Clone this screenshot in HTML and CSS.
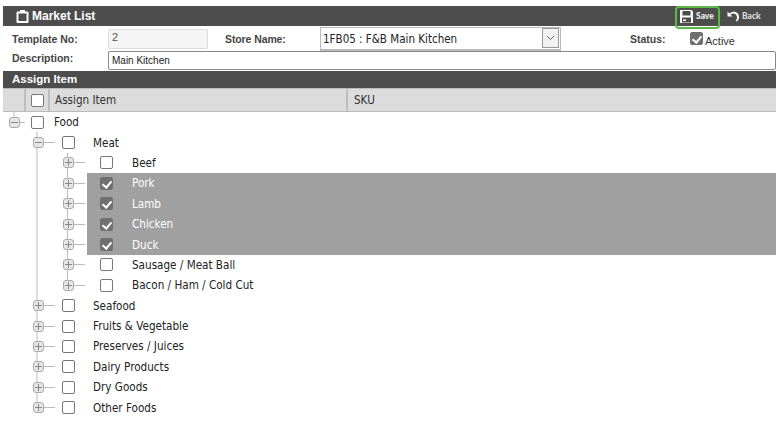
FILE: index.html
```html
<!doctype html>
<html lang="en">

<head>
	<meta charset="UTF-8">
	<title>Market List</title>
	<link rel="stylesheet" href="styles.css">
</head>

<body>
	<div class="page">
		<div class="title-bar">
			<svg class="title-icon" width="13" height="13" viewBox="0 0 13 13">
				<path d="M1.500 1.500h10a1 1 0 0 1 1 1v9.500a1 1 0 0 1-1 1h-10a1 1 0 0 1-1-1V2.500a1 1 0 0 1 1-1z" fill="#fff" />
				<rect x="2.500" y="3.500" width="8" height="7.500" fill="#4d4d4d" />
				<rect x="4" y="0" width="5" height="3" fill="#fff" />
			</svg>
			<span class="title-text">Market List</span>
			<div class="actions">
				<a class="action action-save" href="#">
					<svg width="13" height="13" viewBox="0 0 13 13">
						<path d="M0 0h11.500L13 1.500V13H0z" fill="#fff" />
						<rect x="2.500" y="1" width="8" height="4.500" fill="#4d4d4d" />
						<rect x="2" y="7.500" width="9" height="5" fill="#4d4d4d" />
						<rect x="3" y="9.500" width="3" height="1.500" fill="#fff" />
					</svg>
					Save
				</a>
				<a class="action action-back" href="#">
					<svg width="13" height="11" viewBox="0 0 13 11">
						<path d="M0.500 0.500v5h5l-2-2c2.500-1.800 6-0.800 6.500 2.500 0.200 1.700-0.500 3-1.500 4l1.200 0.500c1.800-1.500 2.500-3.300 2.300-5.200C11.500 1 6.500-0.800 2.500 2.500z" fill="#fff" />
					</svg>
					Back
				</a>
			</div>
		</div>

		<div class="form-row form-row-top">
			<label class="field-label label-template">Template No:</label>
			<input class="input-template" type="text" value="2" readonly>
			<label class="field-label label-store">Store Name:</label>
			<div class="select-store">
				<span class="select-text">1FB05 : F&amp;B Main Kitchen</span>
				<span class="select-arrow">
					<svg width="9" height="6" viewBox="0 0 9 6">
						<path d="M1 1l3.500 3.500L8 1" fill="none" stroke="#666" stroke-width="1" />
					</svg>
				</span>
			</div>
			<label class="field-label label-status">Status:</label>
			<span class="box box-on box-active"></span>
			<span class="active-text">Active</span>
		</div>

		<div class="form-row form-row-desc">
			<label class="field-label label-template label-desc">Description:</label>
			<input class="input-desc" type="text" value="Main Kitchen">
		</div>

		<div class="section-bar">Assign Item</div>

		<div class="table-head">
			<div class="head-cell head-blank"></div>
			<div class="head-cell head-check"><span class="box"></span></div>
			<div class="head-cell head-item">Assign Item</div>
			<div class="head-cell head-sku">SKU</div>
		</div>

		<ul class="tree">
			<li class="node-top">
				<div class="row">
					<span class="toggle toggle-minus"></span><span class="dash"></span>
					<div class="row-body"><span class="box"></span><span class="row-text">Food</span></div>
				</div>
				<ul class="tree-sub">
					<li>
						<div class="row">
							<span class="toggle toggle-minus"></span><span class="dash"></span>
							<div class="row-body"><span class="box"></span><span class="row-text">Meat</span></div>
						</div>
						<ul class="tree-leaf">
							<li class="row"><span class="toggle"></span><span class="dash"></span>
								<div class="row-body"><span class="box"></span><span class="row-text">Beef</span></div>
							</li>
							<li class="row"><span class="toggle"></span><span class="dash"></span>
								<div class="row-body row-selected"><span class="box box-on"></span><span class="row-text">Pork</span></div>
							</li>
							<li class="row"><span class="toggle"></span><span class="dash"></span>
								<div class="row-body row-selected"><span class="box box-on"></span><span class="row-text">Lamb</span></div>
							</li>
							<li class="row"><span class="toggle"></span><span class="dash"></span>
								<div class="row-body row-selected"><span class="box box-on"></span><span class="row-text">Chicken</span></div>
							</li>
							<li class="row"><span class="toggle"></span><span class="dash"></span>
								<div class="row-body row-selected"><span class="box box-on"></span><span class="row-text">Duck</span></div>
							</li>
							<li class="row"><span class="toggle"></span><span class="dash"></span>
								<div class="row-body"><span class="box"></span><span class="row-text">Sausage / Meat Ball</span></div>
							</li>
							<li class="row"><span class="toggle"></span><span class="dash"></span>
								<div class="row-body"><span class="box"></span><span class="row-text">Bacon / Ham / Cold Cut</span></div>
							</li>
						</ul>
					</li>
					<li class="row"><span class="toggle"></span><span class="dash"></span>
						<div class="row-body"><span class="box"></span><span class="row-text">Seafood</span></div>
					</li>
					<li class="row"><span class="toggle"></span><span class="dash"></span>
						<div class="row-body"><span class="box"></span><span class="row-text">Fruits &amp; Vegetable</span></div>
					</li>
					<li class="row"><span class="toggle"></span><span class="dash"></span>
						<div class="row-body"><span class="box"></span><span class="row-text">Preserves / Juices</span></div>
					</li>
					<li class="row"><span class="toggle"></span><span class="dash"></span>
						<div class="row-body"><span class="box"></span><span class="row-text">Dairy Products</span></div>
					</li>
					<li class="row"><span class="toggle"></span><span class="dash"></span>
						<div class="row-body"><span class="box"></span><span class="row-text">Dry Goods</span></div>
					</li>
					<li class="row"><span class="toggle"></span><span class="dash"></span>
						<div class="row-body"><span class="box"></span><span class="row-text">Other Foods</span></div>
					</li>
				</ul>
			</li>
		</ul>
	</div>
</body>

</html>
```

FILE: styles.css
```css
* {
	padding: 0;
	margin: 0;
	box-sizing: border-box;
}

html,
body {
	background: #fff;
	overflow: hidden;
}

body {
	font-family: "Liberation Sans", Arial, sans-serif;
	color: #333;
}

ul {
	list-style: none;
}

.page {
	width: 773px;
	height: 421px;
	margin-left: 3px;
	padding-top: 6px;
}

/* title bar */
.title-bar {
	height: 20px;
	background: #4d4d4d;
	color: #fff;
	display: flex;
	align-items: center;
	padding-left: 13px;
}

.title-icon {
	margin-right: 3px;
}

.title-text {
	font-size: 12px;
	font-weight: bold;
}

.actions {
	margin-left: auto;
	margin-right: 9px;
	display: flex;
	align-items: flex-start;
	height: 20px;
}

.action {
	color: #fff;
	text-decoration: none;
	font-family: "Lato", sans-serif;
	font-size: 8.500px;
	font-weight: 900;
	display: flex;
	align-items: center;
	gap: 3px;
}

.action-save {
	height: 23px;
	width: 45px;
	padding: 0 0 3px 3px;
	border: 2px solid #5cb946;
	border-radius: 4px;
	color: #eee;
	background: linear-gradient(#4d4d4d 18px, #fff 18px);
}

.action-back {
	margin-left: 7px;
	height: 20px;
	width: 40px;
	gap: 2px;
	color: #ddd;
}

/* form */
.form-row {
	display: flex;
	align-items: center;
	font-size: 11px;
}

.form-row-top {
	height: 25px;
}

.form-row-desc {
	height: 20px;
	align-items: flex-start;
}

.field-label {
	font-weight: bold;
	font-size: 10.500px;
	color: #444;
}

.label-template {
	width: 105px;
	padding-left: 9px;
}

.label-desc {
	margin-top: 1px;
}

.input-template {
	width: 100px;
	height: 20px;
	border: 1px solid #ddd;
	border-radius: 2px;
	background: #f5f5f5;
	color: #555;
	padding: 0 3px 3px;
	font: 11px "Liberation Sans", Arial, sans-serif;
}

.label-store {
	margin-left: 17px;
	width: 95px;
	letter-spacing: -0.100px;
}

.select-store {
	width: 241px;
	height: 24px;
	border: 1px solid #bbb;
	border-bottom-width: 2px;
	display: flex;
	align-items: center;
	justify-content: space-between;
	font-family: "DejaVu Sans", sans-serif;
	font-stretch: condensed;
	font-size: 11.500px;
	color: #222;
	padding: 0 1px 0 2px;
}

.select-text {
	padding-top: 2px;
}

.select-arrow {
	width: 17px;
	height: 20px;
	border: 1px solid #999;
	background: #f2f2f2;
	display: flex;
	align-items: center;
	justify-content: center;
}

.label-status {
	margin-left: 69px;
	width: 60px;
}

.box-active {
	margin-top: -1px;
}

.active-text {
	margin: 4px 0 0 2px;
	font-size: 11px;
	color: #333;
}

.input-desc {
	width: 668px;
	height: 19px;
	border: 1px solid #888;
	border-radius: 2px;
	padding: 0 3px;
	font: 10px "Liberation Sans", Arial, sans-serif;
	color: #222;
}

/* assign item */
.section-bar {
	height: 17px;
	background: #4d4d4d;
	color: #fff;
	font-size: 11.500px;
	font-weight: bold;
	line-height: 16px;
	padding-left: 9px;
}

.table-head {
	height: 24px;
	display: flex;
	background: #dcdcdc;
	border-top: 1px solid #bbb;
	border-bottom: 1px solid #bbb;
	font-family: "DejaVu Sans", sans-serif;
	font-stretch: condensed;
	font-size: 11.600px;
	color: #333;
}

.head-cell {
	display: flex;
	align-items: center;
	border-right: 2px solid #bdbdbd;
}

.head-blank {
	width: 23px;
}

.head-check {
	width: 24px;
	padding-left: 5px;
}

.head-item {
	width: 298px;
	padding-left: 5px;
}

.head-sku {
	flex: 1;
	padding-left: 6px;
	border-right: 0;
}

/* checkboxes */
.box {
	display: inline-block;
	flex: none;
	width: 13px;
	height: 13px;
	border: 1px solid #777;
	border-radius: 2px;
	background: #fff;
	position: relative;
}

.box-on {
	background: #707070;
	border-color: #707070;
}

.box-on::after {
	content: "";
	position: absolute;
	left: 3px;
	top: 1px;
	width: 4px;
	height: 7px;
	border: solid #fff;
	border-width: 0 2px 2px 0;
	transform: rotate(40deg);
}

/* tree */
.tree {
	font-family: "DejaVu Sans", sans-serif;
	font-stretch: condensed;
	font-size: 11.600px;
	color: #222;
	padding-left: 6px;
}

.row {
	height: 20.400px;
	display: flex;
	align-items: center;
}

.toggle {
	flex: none;
	width: 11px;
	height: 11px;
	border: 1px solid #aaa;
	border-radius: 3px;
	background: linear-gradient(#888, #888) center / 7px 1px no-repeat,
		linear-gradient(#888, #888) center / 1px 7px no-repeat,
		#e6e6e6;
	position: relative;
}

.toggle-minus {
	background: linear-gradient(#888, #888) center / 7px 1px no-repeat, #e6e6e6;
}

/* stub above the root toggle */
.node-top > .row > .toggle::before {
	content: "";
	position: absolute;
	left: 3px;
	top: -6px;
	width: 2px;
	height: 5px;
	background: #ddd;
}

.dash {
	flex: none;
	width: 11px;
	height: 1px;
	background: #bbb;
}

.row-body {
	flex: 1;
	height: 100%;
	display: flex;
	align-items: center;
}

.row-selected {
	background: #a0a0a0;
	color: #fff;
}

/* top level */
.node-top > .row > .dash {
	width: 5px;
}

.node-top > .row .row-body {
	padding-left: 6px;
}

.node-top > .row .row-text {
	margin-left: 10px;
}

/* second level, guide line stops at the last toggle */
.tree-sub {
	margin-left: 27px;
	padding-left: 2px;
	background: linear-gradient(#ddd, #ddd) 0 0 / 2px calc(100% - 12px) no-repeat;
}

.tree-sub > li > .row,
.tree-sub > .row {
	margin-left: -5px;
}

.tree-sub > li > .row .row-body,
.tree-sub > .row .row-body {
	padding-left: 7px;
}

.tree-sub .row-text {
	margin-left: 18px;
}

/* third level */
.tree-leaf {
	margin-left: 29px;
	padding-left: 1px;
	background: linear-gradient(#bbb, #bbb) 0 0 / 1px calc(100% - 10px) no-repeat;
}

.tree-leaf > .row {
	margin-left: -5px;
}

.tree-leaf > .row .dash {
	margin-right: 2px;
}

.tree-leaf > .row .row-body {
	padding-left: 13px;
}

.tree-leaf .row-text {
	margin-left: 19px;
}
```
